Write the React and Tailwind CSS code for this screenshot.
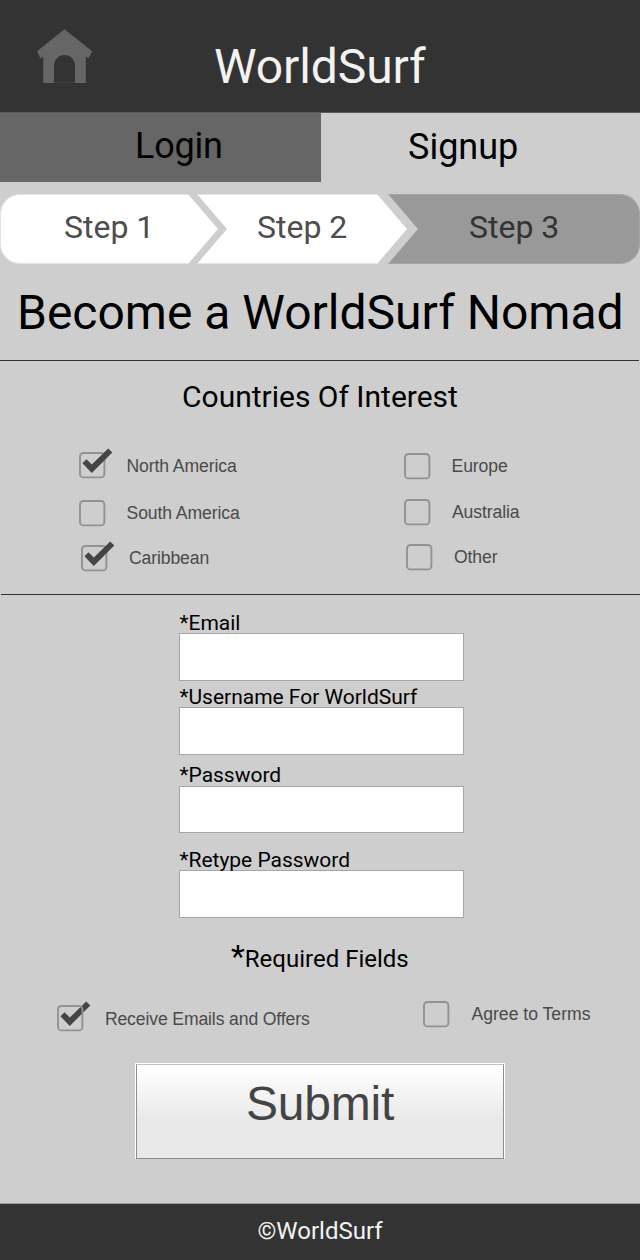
import React from "react";

function CheckBox({ label, checked = false, framed = false, className = "", labelClass = "tracking-[-0.1px]" }) {
  const frame = (
    <rect x="1" y="1" width="24.4" height="24.4" rx="3.5" fill="none" stroke="#929292" strokeWidth="1.9" />
  );
  const tick = (
    <path d="M3.4 11.2 7.5 7.2 12.8 12.4 29.2 -3.6 33.3 0.5 12.8 20.9Z" fill="#454545" />
  );
  return (
    <label className={`flex h-[26px] items-center gap-[20.5px] ${className}`}>
      <svg width="27" height="27" viewBox="0 0 27 27" className="shrink-0 overflow-visible">
        {checked && framed && tick}
        {frame}
        {checked && !framed && tick}
      </svg>
      <span
        className={`whitespace-nowrap font-['Liberation_Sans',Arial,sans-serif] text-[17.6px] leading-[26px] text-[#4a4a4a] ${labelClass}`}
      >
        {label}
      </span>
    </label>
  );
}

function Field({ label, type = "text", className = "", inputClass = "" }) {
  return (
    <label className={`block ${className}`}>
      <span className="block h-[21px] whitespace-nowrap pl-[0.5px] text-[21px] leading-[23px] tracking-[-0.02px] text-black">
        {label}
      </span>
      <input type={type} className={`block w-[285px] border border-[#a6a6a6] bg-white outline-none ${inputClass}`} />
    </label>
  );
}

export default function App() {
  return (
    <div className="flex h-[1260px] w-[640px] flex-col overflow-hidden bg-[#cecece] font-[Roboto,sans-serif] text-black">
      <header className="flex h-[113px] shrink-0 items-start border-b border-[#5a5a5a] bg-[#333333]">
        <svg width="56" height="54" viewBox="0 0 56 54" className="ml-[37px] mt-[29px] shrink-0">
          <path
            d="M27.5 0.3 55.2 22.2 51.5 29.5 48.8 27.5V54H38V37.5C38 30.5 33.5 26 27.5 26S17 30.5 17 37.5V54H6.3V27.5L3.5 29.5 0 22.2Z"
            fill="#666666"
          />
          <path d="M17 53.5H38" stroke="#3e3e3e" />
        </svg>
        <h1 className="ml-[121px] mt-[43px] whitespace-nowrap text-[48px] leading-[48px] tracking-[-0.1px] text-[#f2f2f2]">
          WorldSurf
        </h1>
      </header>

      <nav className="flex h-[69px] shrink-0 text-[36px] leading-[36px]">
        <a className="w-[321px] bg-[#666666] pl-[135px] pt-[15px] tracking-[-0.2px]">Login</a>
        <a className="pl-[87px] pt-[16px]">Signup</a>
      </nav>

      <ol className="mt-3 flex h-[70px] shrink-0 text-[32px] leading-[32px] text-[#4d4d4d]">
        <li className="w-[218px] rounded-l-[20px] border-y border-l border-[#e4e4e4] bg-white pl-[63px] pt-[16px] [clip-path:polygon(0_0,188px_0,100%_50%,188px_100%,0_100%)]">
          Step 1
        </li>
        <li className="-ml-[21px] w-[210px] border-y border-[#e4e4e4] bg-white pl-[60px] pt-[16px] [clip-path:polygon(0_0,180px_0,100%_50%,180px_100%,0_100%,30px_50%)]">
          Step 2
        </li>
        <li className="-ml-[19px] w-[252px] rounded-r-[20px] border-y border-r border-[#a5a5a5] bg-[#999999] pl-[81px] pt-[16px] text-[#333333] [clip-path:polygon(0_0,100%_0,100%_100%,0_100%,30px_50%)]">
          Step 3
        </li>
      </ol>

      <div className="mr-px h-[97px] shrink-0 border-b border-[#333333] pl-[17px] pt-[25px]">
        <h2 className="whitespace-nowrap text-[48px] leading-[48px]">Become a WorldSurf Nomad</h2>
      </div>

      <section className="ml-px flex h-[234px] shrink-0 flex-col border-b border-[#333333]">
        <h3 className="ml-[181px] mt-[21px] whitespace-nowrap text-[30px] leading-[30px]">Countries Of Interest</h3>
        <div className="mt-[40.5px] flex">
          <div className="flex w-[325px] flex-col pl-[78px]">
            <CheckBox label="North America" checked />
            <CheckBox label="South America" className="mt-[21.5px]" />
            <CheckBox label="Caribbean" checked className="ml-[2.4px] mt-[19px]" />
          </div>
          <div className="flex flex-col pl-[78px]">
            <CheckBox label="Europe" className="mt-[0.5px]" />
            <CheckBox label="Australia" className="ml-[0.4px] mt-[20px]" />
            <CheckBox label="Other" className="ml-[2.4px] mt-[19px]" />
          </div>
        </div>
      </section>

      <form className="flex flex-col">
        <div className="pl-[179px] pt-[17px]">
          <Field label="*Email" inputClass="h-[48px]" />
          <Field label="*Username For WorldSurf" className="mt-[5px]" inputClass="h-[48px]" />
          <Field label="*Password" type="password" className="mt-[9px]" inputClass="mt-px h-[47px]" />
          <Field label="*Retype Password" type="password" className="mt-[16px]" inputClass="h-[48px]" />
        </div>

        <p className="ml-[231px] mt-[22px] flex h-[34px] items-baseline whitespace-nowrap text-[24px] leading-[32px]">
          <span className="text-[32px]">*</span>Required Fields
        </p>

        <div className="mt-[26px] flex h-[36px]">
          <CheckBox
            label="Receive Emails and Offers"
            checked
            framed
            className="ml-[57.4px] mt-[5.5px] w-[366px]"
            labelClass="tracking-[-0.13px]"
          />
          <CheckBox label="Agree to Terms" className="mt-px" labelClass="pl-[0.6px] tracking-[0px]" />
        </div>

        <button
          type="button"
          className="ml-[135px] mt-[27px] block h-[96px] w-[370px] border border-b-0 border-white text-left"
        >
          <span className="block h-[95px] border border-[#8e8e8e] border-t-[#c0c0c0] bg-linear-to-b from-white to-[#e9e9e9] to-60% pl-[109px] pt-[15px] font-['Liberation_Sans',Arial,sans-serif] text-[48px] leading-[48px] tracking-[-0.2px] text-[#444444]">
            Submit
          </span>
        </button>
      </form>

      <footer className="mt-auto h-[57px] shrink-0 border-t border-[#999999] bg-[#333333] pl-[257.5px] pt-[15px] text-[24px] leading-[24px] text-[#f2f2f2]">
        ©WorldSurf
      </footer>
    </div>
  );
}
